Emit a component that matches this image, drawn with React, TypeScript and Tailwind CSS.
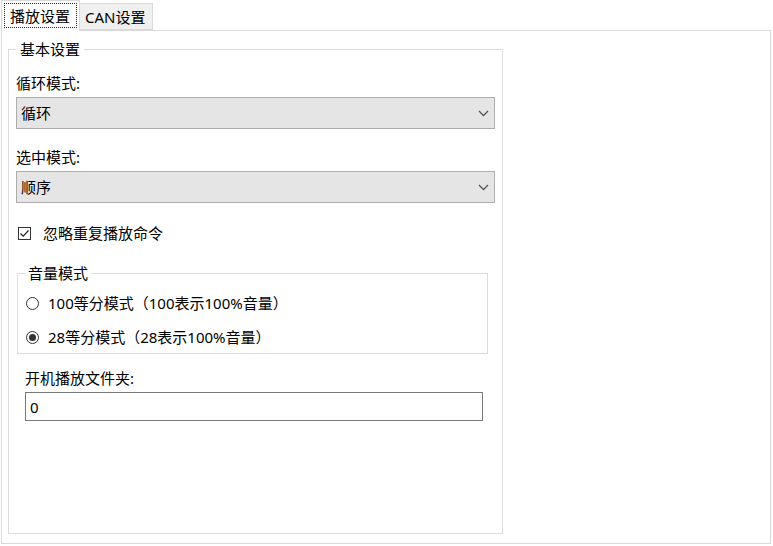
const font = "font-['Noto_Sans','Noto_Sans_CJK_SC',sans-serif]";

function Chevron() {
  return (
    <svg width="11" height="7" viewBox="0 0 11 7" className="mr-[5px]">
      <path d="M1 1 L5.5 5.5 L10 1" fill="none" stroke="#555" strokeWidth="1.3" />
    </svg>
  );
}

function Combo({ value, className }: { value: string; className?: string }) {
  return (
    <div
      className={`ml-[7px] flex h-[32px] w-[479px] items-center justify-between border border-[#adadad] bg-[#e5e5e5] pl-[4px] ${className ?? ""}`}
    >
      <span>{value}</span>
      <Chevron />
    </div>
  );
}

function Radio({ checked, label, className }: { checked?: boolean; label: string; className?: string }) {
  return (
    <div className={`ml-[8px] flex h-[20px] items-center ${className ?? ""}`}>
      <span className="flex h-[13px] w-[13px] items-center justify-center rounded-full border border-[#333] bg-white">
        {checked ? <span className="h-[7px] w-[7px] rounded-full bg-[#333]" /> : null}
      </span>
      <span className="ml-[9px]">{label}</span>
    </div>
  );
}

export default function App() {
  return (
    <div className={`h-[546px] w-[773px] overflow-hidden bg-white text-[15px] leading-[20px] text-black ${font}`}>
      {/* tab strip */}
      <div className="flex h-[30px] items-end pl-[1px]">
        <div className="relative z-10 -mb-px flex h-[31px] w-[79px] border-x border-t border-[#d9d9d9] bg-white p-[2px] pb-[3px]">
          <div className="flex flex-1 items-center border border-dotted border-[#222] pl-[5px]">播放设置</div>
        </div>
        <div className="flex h-[27px] w-[73px] items-center border-y border-r border-[#d9d9d9] bg-[#f0f0f0] pl-[5px]">
          CAN设置
        </div>
      </div>

      {/* tab page */}
      <div className="ml-[1px] h-[514px] w-[770px] border border-[#d9d9d9] bg-white">
        <fieldset className="ml-[6px] mt-[8px] h-[495px] w-[495px] border border-[#dcdcdc] p-0">
          <legend className="ml-[7px] px-[4px] leading-[20px]">基本设置</legend>

          <div className="ml-[7px] mt-[14px]">循环模式:</div>
          <Combo value="循环" className="mt-[4px]" />

          <div className="ml-[7px] mt-[18px]">选中模式:</div>
          <Combo value="顺序" className="mt-[4px]" />

          <div className="ml-[9px] mt-[20px] flex h-[20px] items-center">
            <span className="flex h-[13px] w-[13px] items-center justify-center border border-[#333] bg-white">
              <svg width="11" height="11" viewBox="0 0 11 11">
                <path d="M1.5 5.5 L4.2 8.2 L9.5 2.5" fill="none" stroke="#222" strokeWidth="1.2" />
              </svg>
            </span>
            <span className="ml-[12px]">忽略重复播放命令</span>
          </div>

          <fieldset className="ml-[8px] mt-[20px] w-[471px] border border-[#dcdcdc] p-0 pb-[6px]">
            <legend className="ml-[7px] px-[3px] leading-[20px]">音量模式</legend>
            <Radio label="100等分模式（100表示100%音量）" className="mt-[10px]" />
            <Radio checked label="28等分模式（28表示100%音量）" className="mt-[14px]" />
          </fieldset>

          <div className="ml-[16px] mt-[14px]">开机播放文件夹:</div>
          <div className="ml-[16px] mt-[4px] flex h-[29px] w-[458px] items-center border border-[#7a7a7a] bg-white pl-[4px]">
            0
          </div>
        </fieldset>
      </div>
    </div>
  );
}
